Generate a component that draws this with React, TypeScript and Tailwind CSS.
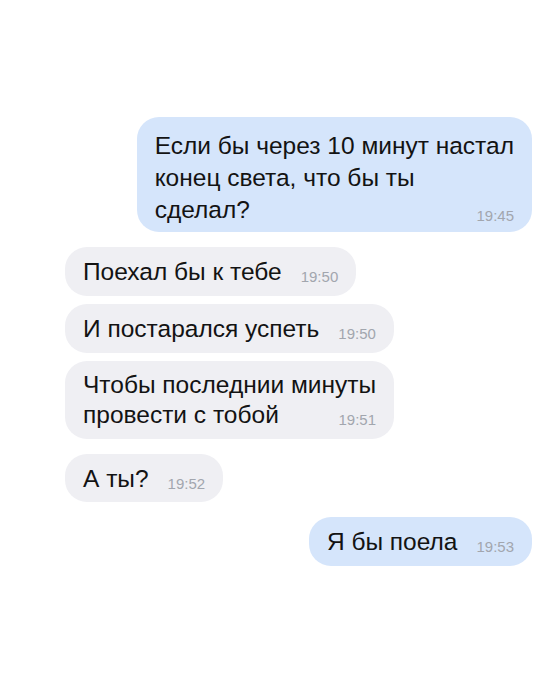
type BubbleProps = {
  lines: string[];
  time: string;
  out?: boolean;
  className?: string;
  leading?: string;
};

function Bubble({ lines, time, out, className = '', leading = 'leading-[31px]' }: BubbleProps) {
  const head = lines.slice(0, -1);
  const last = lines[lines.length - 1];
  return (
    <div
      className={`flex flex-col rounded-[22px] pl-[18px] pr-[18px] text-[24.5px] text-[#131313] ${leading} ${
        out ? 'self-end bg-[#d5e5fb]' : 'self-start bg-[#efeff3]'
      } ${className}`}
    >
      {head.map((l) => (
        <div key={l} className="whitespace-nowrap">
          {l}
        </div>
      ))}
      <div className="flex items-end justify-between">
        <span className="whitespace-nowrap">{last}</span>
        <span className="ml-[19px] mb-[3px] text-[15px] leading-[15px] text-[#a2a6ae]">{time}</span>
      </div>
    </div>
  );
}

export default function App() {
  return (
    <div className="min-h-screen w-full bg-white pt-[117px] pl-[65px] pr-[13px] flex flex-col font-['Liberation_Sans',Arial,sans-serif]">
      <Bubble
        out
        lines={['Если бы через 10 минут настал', 'конец света, что бы ты', 'сделал?']}
        time="19:45"
        leading="leading-[32px]"
        className="pt-[13px] pb-[6px]"
      />
      <Bubble lines={['Поехал бы к тебе']} time="19:50" className="mt-[15px] py-[9px]" />
      <Bubble lines={['И постарался успеть']} time="19:50" className="mt-[8px] py-[9px]" />
      <Bubble
        lines={['Чтобы последнии минуты', 'провести с тобой']}
        time="19:51"
        leading="leading-[30px]"
        className="mt-[8px] py-[9px]"
      />
      <Bubble lines={['А ты?']} time="19:52" className="mt-[15px] py-[8.5px]" />
      <Bubble out lines={['Я бы поела']} time="19:53" className="mt-[15px] py-[9px]" />
    </div>
  );
}
